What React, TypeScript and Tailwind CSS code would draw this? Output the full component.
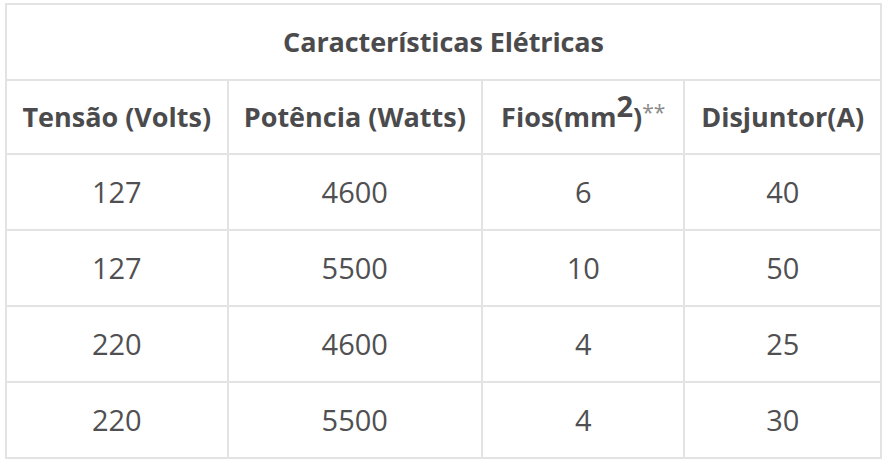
import React from "react";

const rows = [
  ["127", "4600", "6", "40"],
  ["127", "5500", "10", "50"],
  ["220", "4600", "4", "25"],
  ["220", "5500", "4", "30"],
];

export default function App() {
  return (
    <div className="w-[887px] h-[461px] bg-white pt-[3px] pl-[5px]" style={{ fontFamily: '"Open Sans", sans-serif' }}>
      <table className="border-collapse border-2 border-[#e3e3e3] text-[#4b4b4d] w-[877px]">
        <colgroup>
          <col className="w-[222px]" />
          <col className="w-[255px]" />
          <col className="w-[203px]" />
          <col className="w-[197px]" />
        </colgroup>
        <thead>
          <tr className="h-[76px]">
            <th colSpan={4} className="border-2 border-[#e3e3e3] text-[27px] font-bold text-center align-middle tracking-[-0.1px]">
              Características Elétricas
            </th>
          </tr>
          <tr className="h-[74px]">
            <th className="border-2 border-[#e3e3e3] text-[27px] font-bold text-center whitespace-nowrap">Tensão (Volts)</th>
            <th className="border-2 border-[#e3e3e3] text-[27px] font-bold text-center whitespace-nowrap">Potência (Watts)</th>
            <th className="border-2 border-[#e3e3e3] text-[27px] font-bold text-center whitespace-nowrap">
              Fios(mm<sup className="text-[29px] relative -top-[10px]">2</sup>)<span className="text-[21px] text-[#8a8a8a] font-normal relative -top-[7px]">**</span>
            </th>
            <th className="border-2 border-[#e3e3e3] text-[27px] font-bold text-center whitespace-nowrap">Disjuntor(A)</th>
          </tr>
        </thead>
        <tbody>
          {rows.map((r, i) => (
            <tr key={i} className="h-[76px]">
              {r.map((c, j) => (
                <td key={j} className="border-2 border-[#e3e3e3] text-[29px] text-[#505052] text-center align-middle">
                  {c}
                </td>
              ))}
            </tr>
          ))}
        </tbody>
      </table>
    </div>
  );
}
